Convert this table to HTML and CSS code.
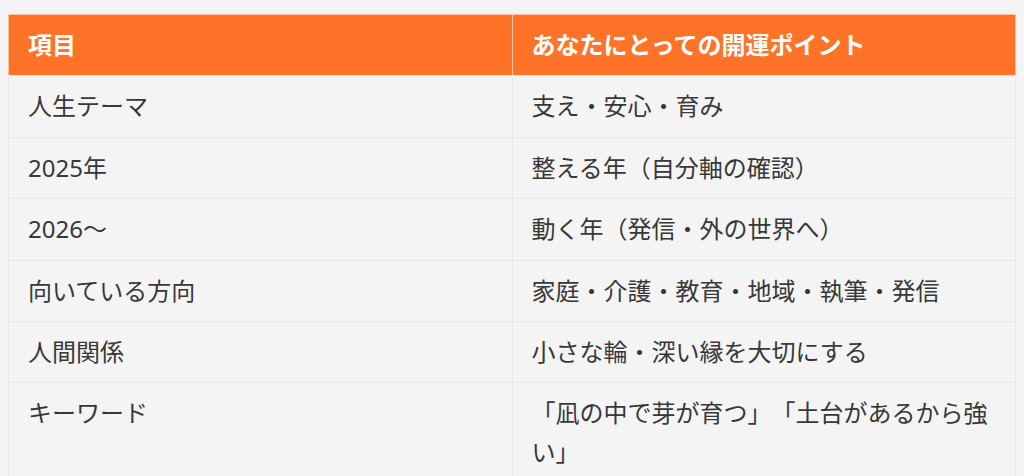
FILE: index.html
```html
<!DOCTYPE html>
<html lang="ja">
<head>
<meta charset="utf-8">
<title>開運ポイント</title>
<link rel="stylesheet" href="styles.css">
</head>
<body>
<div class="page">
  <table class="fortune">
    <thead>
      <tr>
        <th>項目</th>
        <th>あなたにとっての開運ポイント</th>
      </tr>
    </thead>
    <tbody>
      <tr><td>人生テーマ</td><td>支え・安心・育み</td></tr>
      <tr><td>2025年</td><td>整える年（自分軸の確認）</td></tr>
      <tr><td>2026～</td><td>動く年（発信・外の世界へ）</td></tr>
      <tr><td>向いている方向</td><td>家庭・介護・教育・地域・執筆・発信</td></tr>
      <tr><td>人間関係</td><td>小さな輪・深い縁を大切にする</td></tr>
      <tr><td>キーワード</td><td>「凪の中で芽が育つ」「土台があるから強い」</td></tr>
    </tbody>
  </table>
</div>
</body>
</html>
```
FILE: styles.css
```css
html, body {
  margin: 0;
  padding: 0;
  background: #f4f4f4;
}
.page {
  padding: 14px 8px 0 8px;
}
.fortune {
  width: 1008px;
  border-collapse: collapse;
  table-layout: fixed;
  font-family: "Noto Sans", "Noto Sans CJK JP", sans-serif;
  font-size: 24px;
  line-height: 1.6;
  color: #383838;
  text-spacing-trim: space-all;
}
.fortune th,
.fortune td {
  text-align: left;
  vertical-align: top;
  padding: 11px 19px;
  border: 1px solid #e8e8e8;
  width: 50%;
}
.fortune th {
  background: #ff7328;
  color: #ffffff;
  font-weight: 700;
  border-color: #f7c3a6;
  border-bottom-color: #ececec;
}
.fortune td {
  background: #f4f4f4;
}
```
